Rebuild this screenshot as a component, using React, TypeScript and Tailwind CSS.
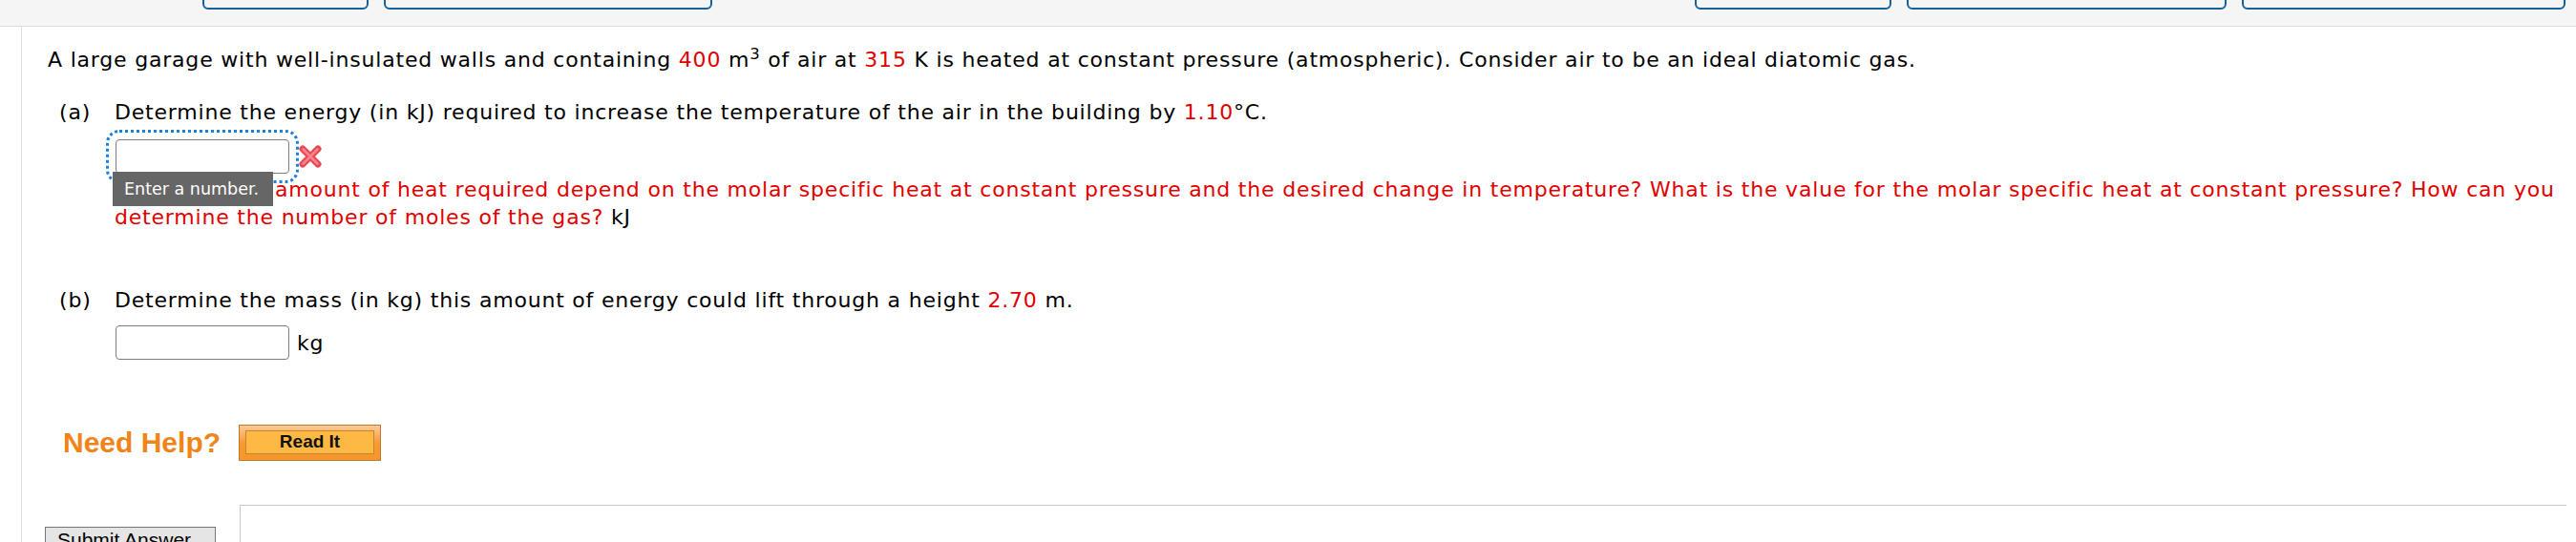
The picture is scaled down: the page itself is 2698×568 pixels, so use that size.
import React from "react";

function TabButton({ className }: { className: string }) {
  return (
    <div
      className={`-mt-[30px] h-[40px] shrink-0 rounded-[6px] border-2 border-[#14619c] bg-[#f5f5f5] ${className}`}
    />
  );
}

function WrongMark() {
  return (
    <svg width="24" height="24" viewBox="0 0 24 24" className="ml-[10px] shrink-0">
      <path d="M4 4 L20 20 M20 4 L4 20" stroke="#e84a55" strokeWidth="7" strokeLinecap="round" />
      <path d="M4.5 4.5 L19.5 19.5 M19.5 4.5 L4.5 19.5" stroke="#f6848b" strokeWidth="2.5" strokeLinecap="round" />
    </svg>
  );
}

export default function App() {
  const red = "text-[#e00000]";

  return (
    <div className="relative h-[568px] w-[2698px] overflow-hidden bg-white font-['DejaVu_Sans',Verdana,sans-serif] text-[22px] tracking-[0.8px] text-black">
      {/* toolbar strip */}
      <div className="flex h-[28px] items-start border-b border-[#dcdcdc] bg-[#f5f5f5]">
        <TabButton className="ml-[212px] w-[174px]" />
        <TabButton className="ml-[16px] w-[344px]" />
        <TabButton className="ml-[1029px] w-[206px]" />
        <TabButton className="ml-[16px] w-[335px]" />
        <TabButton className="ml-[16px] w-[339px]" />
      </div>

      <div className="ml-[22px] flex h-[540px] flex-col border-l border-[#dedede] pl-[27px] pr-[10px] pt-[20px]">
        <p className="whitespace-nowrap leading-[29px]">
          A large garage with well-insulated walls and containing <span className={red}>400</span> m
          <sup>3</sup> of air at <span className={red}>315</span> K is heated at constant pressure
          (atmospheric). Consider air to be an ideal diatomic gas.
        </p>

        {/* part a */}
        <div className="mt-[26px] flex pl-[12px]">
          <span className="w-[58px] shrink-0 leading-[29px]">(a)</span>
          <div className="flex-1">
            <p className="whitespace-nowrap leading-[29px]">
              Determine the energy (in kJ) required to increase the temperature of the air in the building by{" "}
              <span className={red}>1.10</span>°C.
            </p>
            <div className="relative mt-[14px] flex items-center">
              <input
                readOnly
                className="ml-[1px] h-[36px] w-[182px] rounded-[4px] border border-[#7d7d7d] bg-white outline-[3px] outline-offset-[7px] outline-dotted outline-[#1c7fdc]"
              />
              <WrongMark />
              <div className="absolute left-[-2px] top-[34px] z-10 h-[36px] w-[168px] bg-[#666666] pl-[12px] text-[17.5px] leading-[36px] tracking-normal text-white">
                Enter a number.
              </div>
            </div>
            <p className={`mt-[2px] whitespace-nowrap leading-[29px] ${red}`}>
              How does the amount of heat required depend on the molar specific heat at constant pressure and the
              desired change in temperature? What is the value for the molar specific heat at constant pressure? How
              can you
              <br />
              determine the number of moles of the gas? <span className="text-black">kJ</span>
            </p>
          </div>
        </div>

        {/* part b */}
        <div className="mt-[58px] flex pl-[12px]">
          <span className="w-[58px] shrink-0 leading-[29px]">(b)</span>
          <div className="flex-1">
            <p className="whitespace-nowrap leading-[29px]">
              Determine the mass (in kg) this amount of energy could lift through a height{" "}
              <span className={red}>2.70</span> m.
            </p>
            <div className="mt-[12px] flex items-center">
              <input
                readOnly
                className="ml-[1px] h-[36px] w-[182px] rounded-[4px] border border-[#7d7d7d] bg-white outline-none"
              />
              <span className="ml-[8px] leading-[29px]">kg</span>
            </div>
          </div>
        </div>

        {/* help */}
        <div className="mt-[68px] flex items-center pl-[16px] tracking-normal">
          <span className="font-['Liberation_Sans',Arial,sans-serif] text-[30px] font-bold leading-none text-[#ef8419]">
            Need Help?
          </span>
          <div className="ml-[19px] flex h-[38px] w-[149px] border border-[#c0782a] bg-linear-to-b from-[#fbc995] via-[#f89a2e] to-[#f6952a] px-[6px] pb-[6px] pt-[5px]">
            <div className="flex flex-1 items-center justify-center border border-[#c48630] bg-[#fdb943] font-['Liberation_Sans',Arial,sans-serif] text-[19px] font-bold text-[#111]">
              Read It
            </div>
          </div>
        </div>

        {/* submit */}
        <div className="-ml-[3px] mt-[46px] flex tracking-normal">
          <div className="mt-[23px] h-[40px] w-[179px] shrink-0 border border-[#767676] bg-[#e5e5e5] pl-[12px] pt-[1px] font-['Liberation_Sans',Arial,sans-serif] text-[21px] leading-[24px] text-black">
            Submit Answer
          </div>
          <div className="ml-[25px] h-[60px] flex-1 border-l border-t border-[#c8c8c8]" />
        </div>
      </div>
    </div>
  );
}
